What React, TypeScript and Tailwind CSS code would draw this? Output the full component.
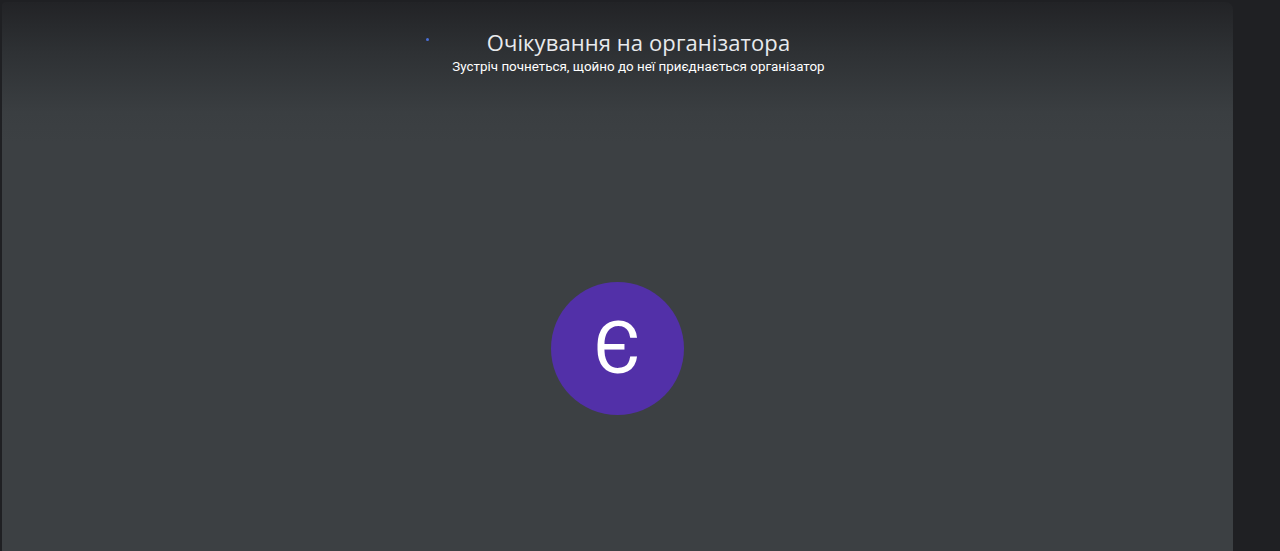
export default function App() {
  return (
    <div className="flex h-[551px] w-[1280px] overflow-hidden bg-[#1f2023] font-['Roboto',sans-serif]">
      <div className="relative mt-[2px] ml-[2px] flex w-[1231px] flex-col rounded-tr-lg rounded-tl-sm bg-[linear-gradient(to_bottom,#222326_0px,#2e3134_50px,#3a3e41_110px,#3c4043_140px,#3c4043_100%)]">
        <div className="absolute left-[424px] top-[36px] h-[3px] w-[3px] rounded-full bg-[#4a6fd8]" />
        <div className="flex flex-col items-center pl-[42px] pt-[25px] text-center text-[#e8eaed]">
          <h1 className="text-[22px] leading-[30px] tracking-[0.1px] font-['Open_Sans',sans-serif]">
            Очікування на організатора
          </h1>
          <p className="mt-[1px] text-[13.4px] leading-[18px] text-white">
            Зустріч почнеться, щойно до неї приєднається організатор
          </p>
        </div>
        <div className="flex flex-1 items-start justify-center pt-[206px]">
          <div className="flex h-[133px] w-[133px] items-center justify-center rounded-full bg-[#5230a8]">
            <span className="text-[72px] leading-none text-white font-['Roboto',sans-serif]">Є</span>
          </div>
        </div>
      </div>
    </div>
  );
}
